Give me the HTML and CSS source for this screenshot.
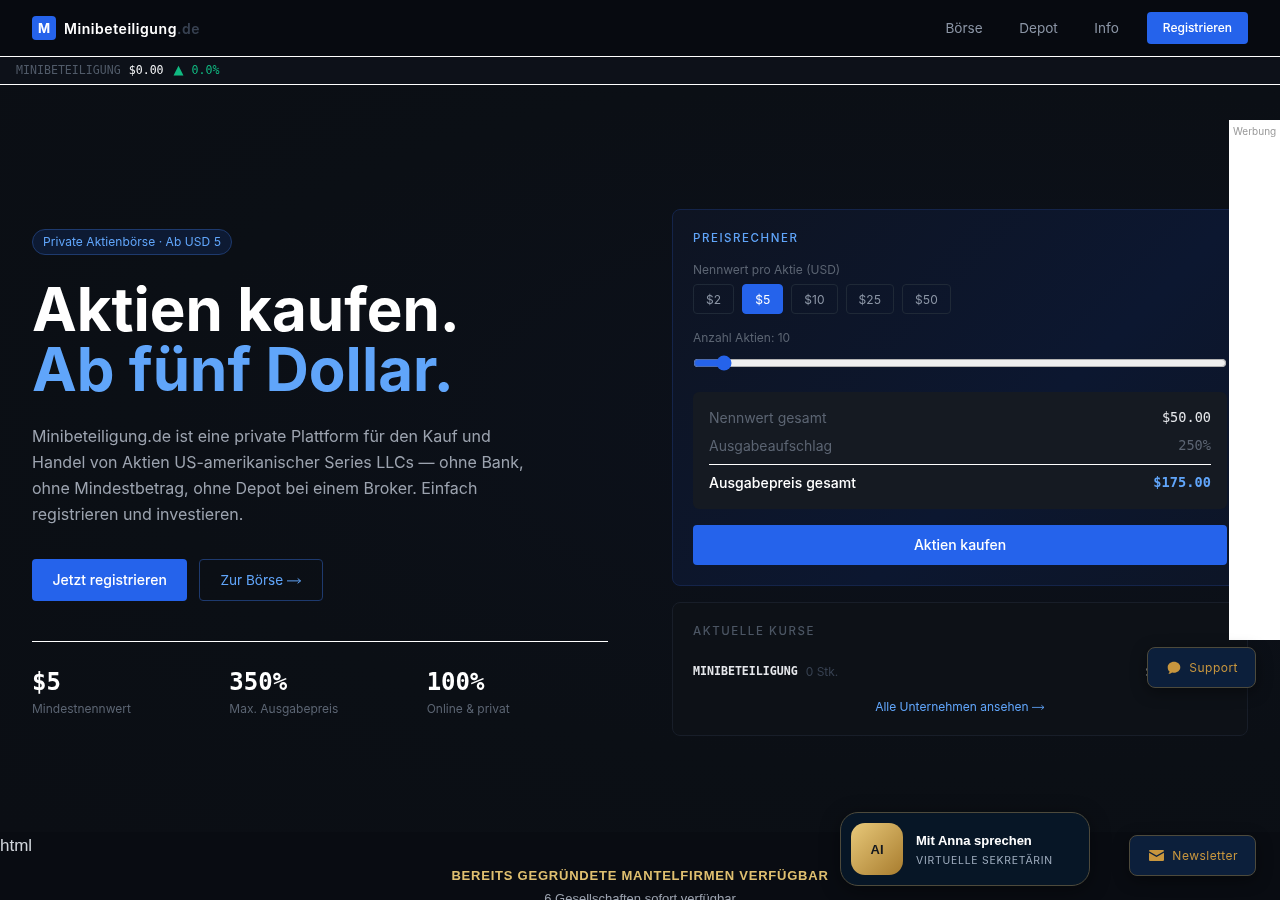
FILE: index.html
```html
<!DOCTYPE html>
<html lang="de">
<head>
  <title>Minibeteiligung.de</title>
  <meta charset="utf-8">
  <meta name="viewport" content="width=device-width, initial-scale=1">
  <link rel="stylesheet" href="styles.css">
</head>
<body>
  <nav class="topnav">
    <a class="brand" href="#"><span class="brand-mark">M</span><span class="brand-name">Minibeteiligung<span class="brand-tld">.de</span></span></a>
    <div class="nav-links">
      <a href="#">Börse</a>
      <a href="#">Depot</a>
      <a href="#">Info</a>
      <a class="nav-cta" href="#">Registrieren</a>
    </div>
  </nav>

  <div class="ticker">
    <span class="ticker-name">MINIBETEILIGUNG</span>
    <span class="ticker-price">$0.00</span>
    <span class="ticker-arrow">▲</span>
    <span class="ticker-up">0.0%</span>
  </div>

  <section class="hero">
    <div class="hero-left">
      <div class="badge">Private Aktienbörse · Ab USD 5</div>
      <h1>Aktien kaufen.<br><span class="accent">Ab fünf Dollar.</span></h1>
      <p class="lead">Minibeteiligung.de ist eine private Plattform für den Kauf und Handel von Aktien US-amerikanischer Series LLCs — ohne Bank, ohne Mindestbetrag, ohne Depot bei einem Broker. Einfach registrieren und investieren.</p>
      <div class="hero-actions">
        <a class="btn btn-primary" href="#">Jetzt registrieren</a>
        <a class="btn btn-outline" href="#">Zur Börse <svg class="arrow" viewBox="0 0 15 8"><path d="M0 4h14M11 1.500 14 4l-3 2.500" fill="none" stroke="currentColor"/></svg></a>
      </div>
      <div class="stats">
        <div><div class="stat-value">$5</div><div class="stat-label">Mindestnennwert</div></div>
        <div><div class="stat-value">350%</div><div class="stat-label">Max. Ausgabepreis</div></div>
        <div><div class="stat-value">100%</div><div class="stat-label">Online &amp; privat</div></div>
      </div>
    </div>

    <div class="hero-right">
      <div class="card calc">
        <div class="card-title">PREISRECHNER</div>
        <div class="field-label">Nennwert pro Aktie (USD)</div>
        <div class="chips">
          <button class="chip">$2</button>
          <button class="chip chip-active">$5</button>
          <button class="chip">$10</button>
          <button class="chip">$25</button>
          <button class="chip">$50</button>
        </div>
        <div class="field-label qty-label">Anzahl Aktien: 10</div>
        <input class="qty" type="range" min="1" max="200" value="10">
        <div class="summary">
          <div class="sum-row"><span>Nennwert gesamt</span><span class="sum-value">$50.00</span></div>
          <div class="sum-row"><span>Ausgabeaufschlag</span><span class="sum-muted">250%</span></div>
          <div class="sum-row sum-total"><span>Ausgabepreis gesamt</span><span class="sum-price">$175.00</span></div>
        </div>
        <button class="buy">Aktien kaufen</button>
      </div>

      <div class="card quotes">
        <div class="card-title card-title-muted">AKTUELLE KURSE</div>
        <div class="quote-row">
          <span class="quote-name">MINIBETEILIGUNG</span>
          <span class="quote-qty">0 Stk.</span>
          <span class="quote-price">$0.00 <span class="ticker-up">0.0%</span></span>
        </div>
        <a class="quotes-all" href="#">Alle Unternehmen ansehen <svg class="arrow" viewBox="0 0 15 8"><path d="M0 4h14M11 1.500 14 4l-3 2.500" fill="none" stroke="currentColor"/></svg></a>
      </div>
    </div>
  </section>

  <div class="stray">html</div>
  <section class="shells">
    <div class="shells-title">BEREITS GEGRÜNDETE MANTELFIRMEN VERFÜGBAR</div>
    <div class="shells-sub">6 Gesellschaften sofort verfügbar</div>
  </section>

  <aside class="ad">Werbung</aside>

  <a class="float-btn float-support" href="#">
    <svg width="14" height="14" viewBox="0 0 14 14"><path fill="currentColor" d="M7 .8c3.5 0 6.3 2.4 6.3 5.5S10.500 11.800 7 11.800c-.7 0-1.300-.1-1.900-.2-1 .8-2.200 1.400-3.700 1.500.6-.7 1-1.500 1.200-2.500C1.200 9.600.7 8 .7 6.300.7 3.200 3.500.8 7 .8z"/></svg>
    Support
  </a>
  <a class="float-btn float-news" href="#">
    <svg width="15" height="11" viewBox="0 0 15 11"><path fill="currentColor" d="M1.300 0h12.400c.7 0 1.300.5 1.300 1.200L7.500 5.500 0 1.200C0 .5.600 0 1.300 0zM0 2.800l7.500 4.300L15 2.800v6.900c0 .7-.6 1.300-1.300 1.300H1.300C.6 11 0 10.400 0 9.700z"/></svg>
    Newsletter
  </a>
  <a class="anna" href="#">
    <span class="anna-avatar">AI</span>
    <span class="anna-text">
      <span class="anna-name">Mit Anna sprechen</span>
      <span class="anna-role">VIRTUELLE SEKRETÄRIN</span>
    </span>
  </a>
</body>
</html>
```

FILE: styles.css
```css
html, body {
  margin: 0;
  height: 900px;
  overflow: hidden;
}
body {
  background-color: #090c12;
  color: #fff;
  font-family: Inter, "Liberation Sans", sans-serif;
  will-change: transform;
}
a {
  text-decoration: none;
}
button {
  font-family: inherit;
}
.arrow {
  display: inline-block;
  width: 1.07em;
  height: 0.57em;
  vertical-align: 0;
}

.topnav {
  height: 56px;
  padding: 0 32px;
  display: flex;
  align-items: center;
  justify-content: space-between;
  background-color: #070a10;
  border-bottom: 1px solid #fff;
}
.brand {
  display: flex;
  align-items: center;
  gap: 8px;
}
.brand-mark {
  width: 24px;
  height: 24px;
  border-radius: 4px;
  background-color: #2563eb;
  color: #fff;
  font-size: 13px;
  font-weight: 700;
  display: flex;
  align-items: center;
  justify-content: center;
}
.brand-name {
  font-size: 14px;
  font-weight: 600;
  color: #fff;
  letter-spacing: 0.04em;
}
.brand-tld {
  color: #374151;
}
.nav-links {
  display: flex;
  align-items: center;
  gap: 36.5px;
  font-size: 13.6px;
}
.nav-links a {
  color: #8b95a5;
}
.nav-links .nav-cta {
  margin-left: -8.5px;
  padding: 0 16px;
  height: 32px;
  line-height: 32px;
  border-radius: 4px;
  background-color: #2563eb;
  color: #fff;
  font-size: 12px;
  font-weight: 500;
}

.ticker {
  height: 25px;
  padding: 0 16px 2px;
  display: flex;
  align-items: center;
  gap: 8px;
  background-color: #0d1119;
  border-bottom: 1px solid #fff;
  font-family: "DejaVu Sans Mono", "Liberation Mono", monospace;
  font-size: 11.6px;
}
.ticker-name {
  color: #505a68;
}
.ticker-price {
  color: #f3f4f6;
}
.ticker-arrow {
  margin-left: 2px;
  font-family: "DejaVu Sans", sans-serif;
  font-size: 13px;
  color: #10b981;
}
.ticker-up {
  color: #10b981;
}

.hero {
  height: 623px;
  padding: 124px 32px 0;
  display: grid;
  grid-template-columns: 1fr 1fr;
  gap: 64px;
  background: radial-gradient(ellipse at 75% 45%, #0c111c 0%, #0b0f15 60%, #0b0e14 100%);
}
.hero-left {
  padding-top: 20px;
}
.badge {
  display: inline-block;
  height: 24px;
  line-height: 24px;
  padding: 0 10px;
  border: 1px solid #1e3a6e;
  border-radius: 13px;
  background-color: #0d1a33;
  color: #60a5fa;
  font-size: 12px;
  font-weight: 400;
  letter-spacing: 0.005em;
}
h1 {
  margin: 24px 0 0;
  font-size: 60px;
  line-height: 60px;
  font-weight: 700;
  color: #fff;
}
.accent {
  color: #60a5fa;
}
.lead {
  margin: 24px 0 0;
  max-width: 500px;
  font-size: 16px;
  line-height: 26px;
  color: #9ca3af;
}
.hero-actions {
  margin-top: 32px;
  display: flex;
  gap: 12px;
}
.btn {
  height: 42px;
  line-height: 42px;
  box-sizing: border-box;
  padding: 0 20px;
  border-radius: 4px;
  font-size: 14px;
}
.btn-primary {
  padding: 0 20.5px;
  background-color: #2563eb;
  color: #fff;
  font-weight: 500;
}
.btn-outline {
  line-height: 40px;
  border: 1px solid #1e3a6e;
  color: #60a5fa;
  font-size: 13.6px;
}
.stats {
  margin-top: 40px;
  padding-top: 24px;
  border-top: 1px solid #fff;
  display: grid;
  grid-template-columns: repeat(3, 1fr);
  gap: 16px;
}
.stat-value {
  font-family: "DejaVu Sans Mono", "Liberation Mono", monospace;
  font-size: 24px;
  line-height: 32px;
  font-weight: 700;
  color: #fff;
}
.stat-label {
  margin-top: 2px;
  font-size: 12px;
  line-height: 17px;
  color: #5b6472;
}

.card {
  box-sizing: border-box;
  border-radius: 8px;
  padding: 20px;
}
.calc {
  height: 377px;
  background: linear-gradient(135deg, #0e1422 0%, #0c1730 60%, #0d1526 100%);
  border: 1px solid #14244a;
}
.card-title {
  font-size: 11.5px;
  line-height: 16px;
  font-weight: 500;
  letter-spacing: 0.135em;
  color: #60a5fa;
}
.card-title-muted {
  color: #4b5563;
}
.field-label {
  margin-top: 16px;
  font-size: 12px;
  line-height: 16px;
  color: #5b6472;
}
.chips {
  margin-top: 6px;
  display: flex;
  gap: 8px;
}
.chip {
  height: 30px;
  padding: 0 12px;
  border: 1px solid #1f2937;
  border-radius: 4px;
  background-color: transparent;
  color: #8b95a5;
  font-size: 12px;
  letter-spacing: 0.005em;
}
.chip-active {
  background-color: #2563eb;
  border-color: #2563eb;
  color: #fff;
}
.qty-label {
  margin-top: 16px;
}
.qty {
  display: block;
  width: 100%;
  margin: 9px 0 0;
  accent-color: #2563eb;
}
.summary {
  margin-top: 21px;
  padding: 11px 16px 12px;
  height: 117px;
  box-sizing: border-box;
  background-color: #151a22;
  border-radius: 6px;
  font-size: 14px;
  color: #5b6472;
}
.sum-row {
  height: 28px;
  display: flex;
  align-items: center;
  justify-content: space-between;
}
.sum-value, .sum-muted, .sum-price {
  font-family: "DejaVu Sans Mono", "Liberation Mono", monospace;
  font-size: 13.6px;
}
.sum-value {
  color: #e5e7eb;
}
.sum-muted {
  color: #5b6472;
}
.sum-total {
  margin-top: 5px;
  height: 34px;
  border-top: 1px solid #fff;
  color: #fff;
  font-weight: 500;
  letter-spacing: 0.005em;
}
.sum-price {
  font-weight: 700;
  color: #60a5fa;
}
.buy {
  display: block;
  width: 100%;
  height: 40px;
  margin-top: 16px;
  padding: 0 0 2px;
  border: none;
  border-radius: 4px;
  background-color: #2563eb;
  color: #fff;
  font-size: 14px;
  font-weight: 500;
}

.quotes {
  height: 134px;
  margin-top: 16px;
  background-color: #0d1117;
  border: 1px solid #181e29;
}
.quote-row {
  margin-top: 23px;
  display: flex;
  align-items: center;
  gap: 8px;
  height: 18px;
}
.quote-name {
  font-family: "DejaVu Sans Mono", "Liberation Mono", monospace;
  font-size: 11.6px;
  font-weight: 700;
  color: #e5e7eb;
}
.quote-qty {
  font-size: 12px;
  color: #374151;
}
.quote-price {
  margin-left: auto;
  font-family: "DejaVu Sans Mono", "Liberation Mono", monospace;
  font-size: 13.6px;
  color: #e5e7eb;
}
.quotes-all {
  display: block;
  margin-top: 18px;
  text-align: center;
  font-size: 12px;
  line-height: 18px;
  color: #60a5fa;
}

.stray {
  padding-top: 5px;
  font-family: "Liberation Sans", sans-serif;
  font-size: 17px;
  line-height: 18px;
  color: #d1d5db;
}
.shells {
  text-align: center;
  font-family: "Liberation Sans", sans-serif;
}
.shells-title {
  margin-top: 13px;
  font-size: 13px;
  line-height: 16px;
  font-weight: 700;
  letter-spacing: 0.06em;
  color: #e0c070;
}
.shells-sub {
  margin-top: 7px;
  font-size: 13px;
  line-height: 16px;
  color: #9ca3af;
}

.ad {
  position: fixed;
  top: 120px;
  right: 0;
  width: 51px;
  height: 520px;
  box-sizing: border-box;
  padding: 5px 4px;
  background-color: #fff;
  color: #999;
  font-size: 10px;
  line-height: 13px;
}

.float-btn {
  position: fixed;
  right: 24px;
  height: 41px;
  box-sizing: border-box;
  padding: 0 17px 0 19px;
  display: flex;
  align-items: center;
  gap: 8px;
  border: 1px solid #4d4a3c;
  border-radius: 8px;
  background-color: #0c1f3b;
  color: #c8963e;
  font-size: 12px;
  letter-spacing: 0.04em;
  box-shadow: 0 4px 16px rgba(0,0,0,.4);
}
.float-support {
  top: 647px;
}
.float-news {
  top: 835px;
}
.anna {
  position: fixed;
  left: 840px;
  top: 812px;
  width: 250px;
  height: 74px;
  box-sizing: border-box;
  padding: 10px;
  display: flex;
  align-items: center;
  gap: 13px;
  border: 1px solid #4d4a3c;
  border-radius: 18px;
  background-color: #071626;
  box-shadow: 0 4px 20px rgba(0,0,0,.4);
}
.anna-avatar {
  width: 52px;
  height: 52px;
  border-radius: 14px;
  background: linear-gradient(135deg, #e8c97a, #a87c2e);
  color: #14181f;
  font-family: "Liberation Sans", sans-serif;
  font-size: 13px;
  font-weight: 700;
  display: flex;
  align-items: center;
  justify-content: center;
}
.anna-text {
  display: flex;
  flex-direction: column;
  gap: 5px;
  padding-top: 2px;
}
.anna-name {
  font-family: "Liberation Sans", sans-serif;
  font-size: 13px;
  line-height: 16px;
  font-weight: 700;
  color: #fff;
}
.anna-role {
  font-size: 10.4px;
  line-height: 14px;
  letter-spacing: 0.075em;
  color: #a0aec0;
}
```
